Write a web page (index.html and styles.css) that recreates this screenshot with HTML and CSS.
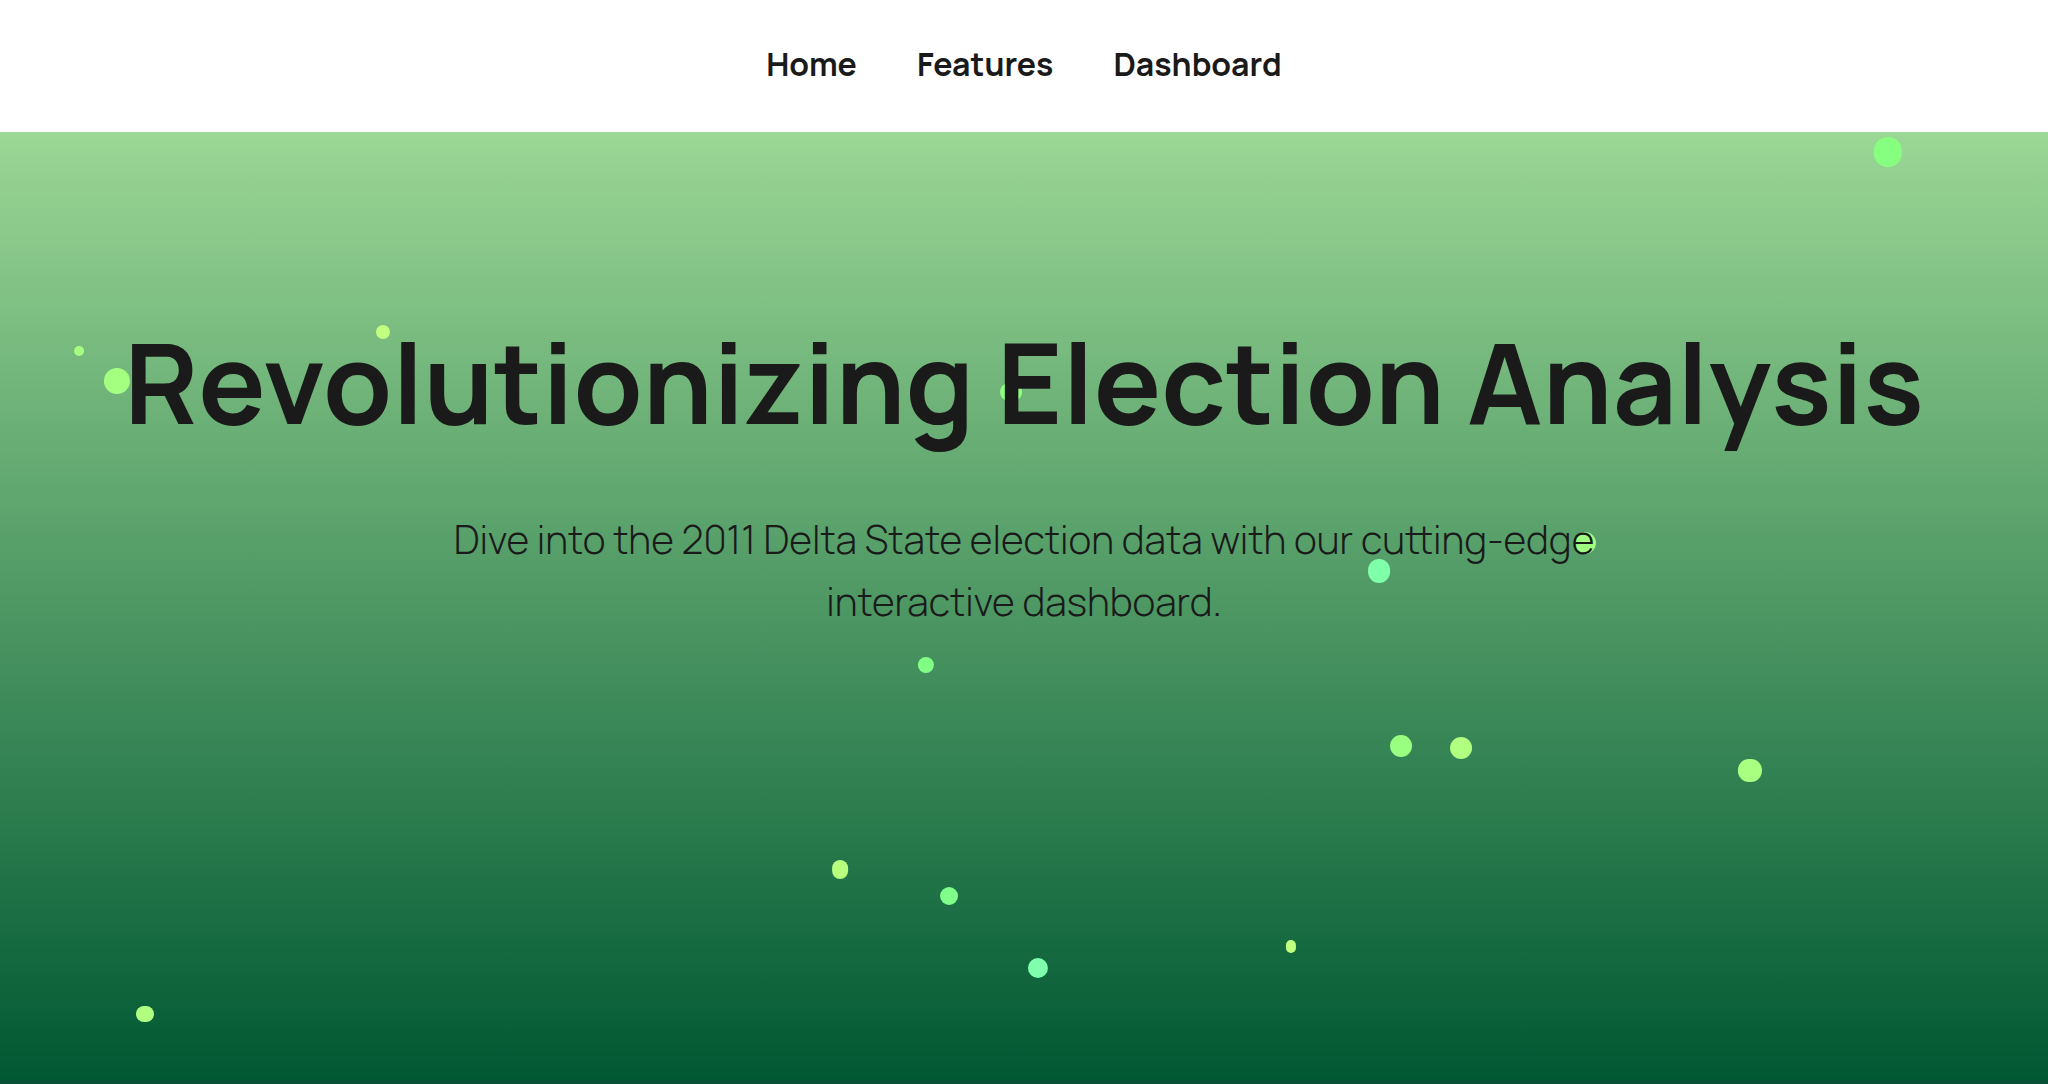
FILE: index.html
```html
<!DOCTYPE html>
<html lang="en">
<head>
<meta charset="utf-8">
<title>Election Analysis</title>
<link rel="stylesheet" href="styles.css">
</head>
<body>
<header class="site-header">
  <nav class="nav">
    <a class="nav-link" href="#home">Home</a>
    <a class="nav-link" href="#features">Features</a>
    <a class="nav-link" href="#dashboard">Dashboard</a>
  </nav>
</header>
<main>
  <section class="hero" id="home">
    <svg class="particles" aria-hidden="true">
      <ellipse cx="3.86%" cy="219" rx="5" ry="5" fill="#a6ff80"/>
      <ellipse cx="5.71%" cy="249" rx="13" ry="13" fill="#a4ff80"/>
      <ellipse cx="18.7%" cy="200" rx="7" ry="7" fill="#c0ff80"/>
      <ellipse cx="49.37%" cy="260" rx="11" ry="10" fill="#90ff80"/>
      <rect x="66.8%" y="427" width="22" height="24" rx="11" fill="#80ffaa"/>
      <ellipse cx="77.39%" cy="411" rx="11" ry="11" fill="#a0ff80"/>
      <rect x="91.5%" y="5" width="28" height="30" rx="14" fill="#86ff80"/>
      <rect x="6.64%" y="874" width="18" height="16" rx="8" fill="#b0ff80"/>
      <ellipse cx="45.21%" cy="533" rx="8" ry="8" fill="#80ff84"/>
      <rect x="40.63%" y="728" width="16" height="19" rx="8" fill="#b8ff80"/>
      <ellipse cx="46.34%" cy="764" rx="9" ry="9" fill="#80ff8a"/>
      <ellipse cx="68.41%" cy="614" rx="11" ry="11" fill="#99ff80"/>
      <ellipse cx="71.34%" cy="616" rx="11" ry="11" fill="#b0ff80"/>
      <rect x="84.86%" y="627" width="24" height="23" rx="11" fill="#a8ff80"/>
      <ellipse cx="50.68%" cy="836" rx="10" ry="10" fill="#80ffac"/>
      <rect x="62.79%" y="808" width="10" height="13" rx="5" fill="#c0ff80"/>
    </svg>
    <h1 class="hero-title">Revolutionizing Election Analysis</h1>
    <p class="hero-text">Dive into the 2011 Delta State election data with our cutting-edge interactive dashboard.</p>
  </section>
</main>
</body>
</html>
```
FILE: styles.css
```css
* {
  box-sizing: border-box;
}

body {
  margin: 0;
  background: #085136;
  color: #1a1a1a;
  font-family: Manrope, Inter, sans-serif;
}

.site-header {
  padding: 40px 32px 44px;
  background: #fff;
}

.nav {
  display: flex;
  justify-content: center;
  gap: 60px;
}

.nav-link {
  color: inherit;
  font-size: 32px;
  line-height: 48px;
  font-weight: 700;
  text-decoration: none;
}

.hero {
  position: relative;
  min-height: calc(100vh - 136px);
  padding: 160px 32px;
  background: linear-gradient(#9bd795, #005832);
  text-align: center;
}

.particles {
  position: absolute;
  inset: 0;
  width: 100%;
  height: 100%;
}

.hero-title,
.hero-text {
  position: relative;
}

.hero-title {
  margin: 0 0 36px;
  font-size: 112px;
  line-height: 180px;
  font-weight: 700;
}

.hero-text {
  max-width: 1200px;
  margin: 0 auto;
  font-size: 39px;
  line-height: 62px;
  font-weight: 300;
}
```
